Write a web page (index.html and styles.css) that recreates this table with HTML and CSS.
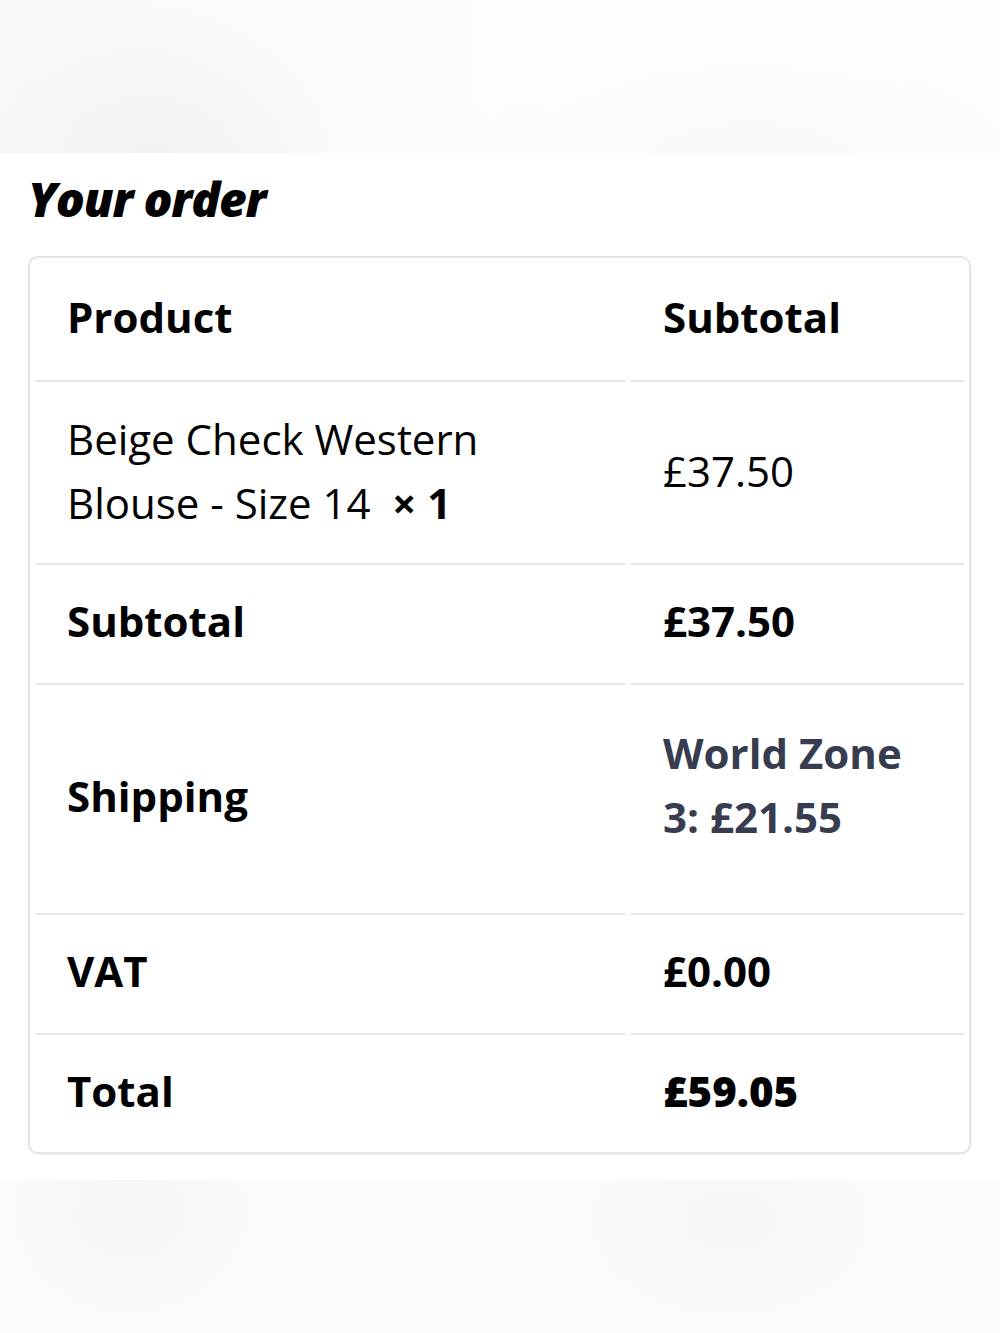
FILE: index.html
```html
<!DOCTYPE html>
<html lang="en">
<head>
<meta charset="utf-8">
<title>Your order</title>
<link rel="stylesheet" href="styles.css">
</head>
<body>
<div class="band band-top"></div>
<main class="main">
  <h2 class="heading">Your order</h2>
  <div class="card">
    <table class="order">
      <colgroup><col class="col-left"><col class="col-right"></colgroup>
      <thead>
        <tr><th class="cell head">Product</th><th class="cell head">Subtotal</th></tr>
      </thead>
      <tbody>
        <tr class="item">
          <td class="cell">Beige Check Western Blouse - Size 14&nbsp; <strong class="qty">×&nbsp;1</strong></td>
          <td class="cell">£37.50</td>
        </tr>
        <tr>
          <th class="cell label">Subtotal</th>
          <td class="cell value">£37.50</td>
        </tr>
        <tr>
          <th class="cell label">Shipping</th>
          <td class="cell value"><ul class="ship"><li class="ship-item">World Zone 3: £21.55</li></ul></td>
        </tr>
        <tr>
          <th class="cell label">VAT</th>
          <td class="cell value">£0.00</td>
        </tr>
        <tr class="last">
          <th class="cell label">Total</th>
          <td class="cell value total">£59.05</td>
        </tr>
      </tbody>
    </table>
  </div>
</main>
<div class="band band-bottom"></div>
</body>
</html>
```

FILE: styles.css
```css
html, body {
  margin: 0;
  padding: 0;
  background: #ffffff;
}
body {
  width: 1000px;
  height: 1333px;
  overflow: hidden;
  font-family: "Open Sans", "Noto Sans", "DejaVu Sans", sans-serif;
  color: #000;
}
.band {
  width: 1000px;
  height: 153px;
}
.band-top {
  background:
    radial-gradient(ellipse 210px 170px at 150px 170px, #f1f1f1 0%, #f4f4f4 35%, rgba(250,250,250,0) 100%),
    radial-gradient(ellipse 330px 150px at 750px 175px, #f7f7f7 0%, #fbfbfb 50%, rgba(253,253,253,0) 100%),
    linear-gradient(90deg, #f9f9f9 0%, #fcfcfc 45%, #fefefe 60%, #fdfdfd 100%);
}
.band-bottom {
  background:
    radial-gradient(ellipse 170px 150px at 130px 30px, #f5f5f5 0%, rgba(250,250,250,0) 100%),
    radial-gradient(ellipse 220px 150px at 730px 40px, #f6f6f6 0%, rgba(251,251,251,0) 100%),
    #fcfcfc;
}
.main {
  height: 1027px;
  box-sizing: border-box;
  padding: 17px 29px 0 28px;
  background: #fff;
}
.heading {
  margin: 0 0 28px 0;
  font-size: 48px;
  line-height: 58px;
  font-weight: 800;
  font-style: italic;
  letter-spacing: -1.2px;
  color: #000;
}
.card {
  box-sizing: border-box;
  width: 943px;
  border: 2px solid #e4e4e4;
  border-radius: 10px;
  padding: 0 5px;
  box-shadow: 0 1px 2px rgba(0,0,0,0.06);
}
.order {
  table-layout: fixed;
  border-collapse: separate;
  border-spacing: 6px 0;
  margin: 0 -6px;
  width: 941px;
}
.col-left { width: 590px; }
.col-right { width: 333px; }
.cell {
  text-align: left;
  vertical-align: middle;
  padding: 24px 30px 30px 32px;
  font-size: 42px;
  line-height: 64px;
  border-bottom: 2px solid #e6e6e6;
  font-weight: 400;
}
.cell.head {
  padding-top: 27px;
  padding-bottom: 31px;
  font-weight: 700;
}
.item .cell {
  padding-top: 25px;
  padding-bottom: 28px;
}
.cell.label,
.cell.value {
  font-weight: 700;
}
.cell.total {
  font-weight: 800;
}
.last .cell {
  border-bottom: none;
  padding-bottom: 29px;
}
.qty {
  font-weight: 700;
}
.ship {
  list-style: none;
  margin: 0;
  padding: 12px 0 34px;
}
.ship-item {
  color: #373d4f;
}
```
